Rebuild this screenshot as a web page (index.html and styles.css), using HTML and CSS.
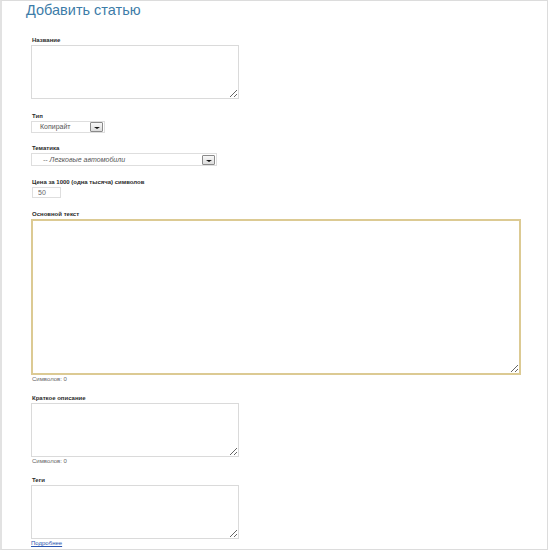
FILE: index.html
```html
<!DOCTYPE html>
<html lang="ru">
<head>
<meta charset="utf-8">
<title>Добавить статью</title>
<link rel="stylesheet" href="styles.css">
</head>
<body>
<div class="frame">
  <h1 class="title">Добавить статью</h1>
  <form class="form">
    <div class="field field-name">
      <label class="label">Название</label>
      <textarea class="area area-small"></textarea>
    </div>
    <div class="field field-type">
      <label class="label">Тип</label>
      <div class="select select-type">
        <span class="select-value">Копирайт</span>
        <span class="select-btn"><span class="arrow"></span></span>
      </div>
    </div>
    <div class="field field-topic">
      <label class="label">Тематика</label>
      <div class="select select-topic">
        <span class="select-value select-value-italic">-- Легковые автомобили</span>
        <span class="select-btn"><span class="arrow"></span></span>
      </div>
    </div>
    <div class="field field-price">
      <label class="label">Цена за 1000 (одна тысяча) символов</label>
      <input class="input-price" type="text" value="50">
    </div>
    <div class="field field-main">
      <label class="label">Основной текст</label>
      <textarea class="area area-main"></textarea>
      <div class="counter">Символов: 0</div>
    </div>
    <div class="field field-short">
      <label class="label">Краткое описание</label>
      <textarea class="area area-small"></textarea>
      <div class="counter">Символов: 0</div>
    </div>
    <div class="field field-tags">
      <label class="label">Теги</label>
      <textarea class="area area-small"></textarea>
      <a class="more" href="#">Подробнее</a>
    </div>
  </form>
</div>
</body>
</html>
```

FILE: styles.css
```css
html, body {
  margin: 0;
  padding: 0;
  background: #ffffff;
}

body {
  font-family: "Liberation Sans", Arial, sans-serif;
}

.frame {
  box-sizing: border-box;
  width: 548px;
  height: 550px;
  border-top: 1px solid #dcdcdc;
  border-left: 2px solid #e2e2e2;
  border-right: 1px solid #dcdcdc;
  border-bottom: 1px solid #dcdcdc;
  overflow: hidden;
}

.title {
  margin: 0 0 0 24px;
  font-size: 14.5px;
  line-height: 19px;
  font-weight: normal;
  color: #3d7ca8;
}

.form {
  display: flex;
  flex-direction: column;
  padding: 16px 0 0 29px;
}

.field {
  display: flex;
  flex-direction: column;
  align-items: flex-start;
}

.field-name { margin-bottom: 13px; }
.field-type { margin-bottom: 11px; }
.field-topic { margin-bottom: 12px; }
.field-price { margin-bottom: 12px; }
.field-main { margin-bottom: 10px; }
.field-short { margin-bottom: 10px; }

.label {
  display: block;
  margin-left: 1px;
  font-size: 6px;
  line-height: 9px;
  font-weight: bold;
  color: #2a2a2a;
}

.area {
  box-sizing: border-box;
  display: block;
  margin: 0;
  padding: 2px;
  border: 1px solid #dadada;
  border-radius: 0;
  background: #fff;
  font-family: "Liberation Sans", Arial, sans-serif;
  font-size: 6px;
}

.area-small {
  width: 208px;
  height: 54px;
}

.area-main {
  width: 490px;
  height: 156px;
  border: 2px solid #dcca93;
  outline: none;
}

.counter {
  margin-left: 1px;
  font-size: 6px;
  line-height: 9px;
  color: #666;
}

.more {
  display: block;
  font-size: 6px;
  line-height: 9px;
  color: #2b55b0;
  text-decoration: underline;
}

.select {
  box-sizing: border-box;
  display: flex;
  align-items: center;
  justify-content: space-between;
  border: 1px solid #dedede;
  background: #fff;
  padding: 0 1px 0 0;
}

.select-type {
  width: 74px;
  height: 12px;
}

.select-topic {
  width: 186px;
  height: 13px;
}

.select-value {
  padding-left: 8px;
  font-size: 7px;
  line-height: 10px;
  color: #555;
}

.select-value-italic {
  padding-left: 11px;
  font-style: italic;
}

.select-btn {
  box-sizing: border-box;
  display: flex;
  align-items: center;
  justify-content: center;
  width: 13px;
  height: 10px;
  border: 1px solid #8a8a8a;
  border-radius: 1px;
  background: linear-gradient(#f8f8f8, #dcdcdc);
}

.arrow {
  display: block;
  width: 0;
  height: 0;
  margin-top: 2px;
  border-left: 3px solid transparent;
  border-right: 3px solid transparent;
  border-top: 2px solid #111;
}

.input-price {
  box-sizing: border-box;
  display: block;
  width: 29px;
  height: 11px;
  margin: 0 0 0 1px;
  padding: 0 0 0 5px;
  border: 1px solid #dedede;
  font-family: "Liberation Sans", Arial, sans-serif;
  font-size: 7px;
  color: #666;
}
```
